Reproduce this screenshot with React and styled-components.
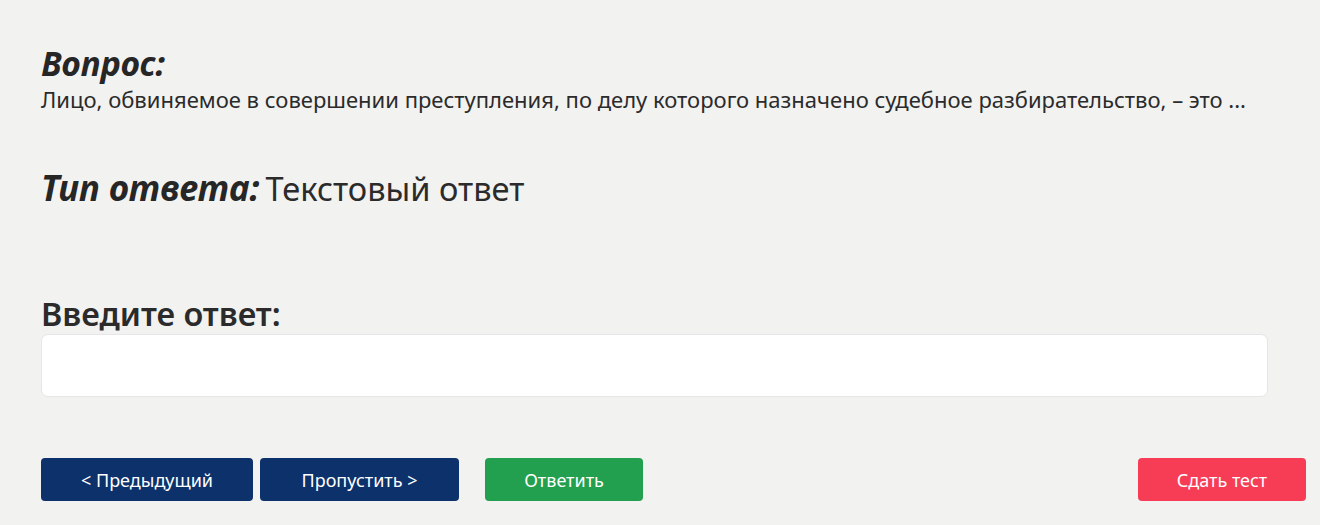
import React from 'react';
import styled, { createGlobalStyle } from 'styled-components';

const Global = createGlobalStyle`
  html, body {
    margin: 0;
    background: #f2f2f1;
    font-family: "Noto Sans", "Open Sans", sans-serif;
    color: #2b2b2b;
  }
`;

function App() {
  return (
    <Page>
      <Global />
      <Section>
        <Label>Вопрос:</Label>
        <Question>
          Лицо, обвиняемое в совершении преступления, по делу которого назначено судебное разбирательство, – это ...
        </Question>
      </Section>
      <TypeRow>
        <TypeLabel>Тип ответа:</TypeLabel>
        <TypeValue>Текстовый ответ</TypeValue>
      </TypeRow>
      <AnswerBlock>
        <AnswerTitle>Введите ответ:</AnswerTitle>
        <AnswerInput type="text" />
      </AnswerBlock>
      <Buttons>
        <Button $color="#0c316b">&lt; Предыдущий</Button>
        <Button $color="#0c316b" $w="199px">Пропустить &gt;</Button>
        <Button $color="#22a04f" $w="158px" $ml="19px">Ответить</Button>
        <Spacer />
        <Button $color="#f63d55" $w="168px">Сдать тест</Button>
      </Buttons>
    </Page>
  );
}

export default App;

const Page = styled.div`
  padding: 43px 14px 0 41px;
  display: flex;
  flex-direction: column;
`;
const Section = styled.div`
  display: flex;
  flex-direction: column;
`;
const Label = styled.h2`
  margin: 0;
  font-size: 33.5px;
  font-weight: 700;
  font-style: italic;
  line-height: 40px;
  color: #262626;
`;
const Question = styled.p`
  margin: 2px 0 0;
  font-size: 22px;
  line-height: 28px;
`;
const TypeRow = styled.div`
  margin-top: 53px;
  display: flex;
  align-items: baseline;
  gap: 6px;
  line-height: 44px;
`;
const TypeLabel = styled.span`
  font-size: 35px;
  font-weight: 700;
  font-style: italic;
  color: #262626;
`;
const TypeValue = styled.span`
  font-size: 32.6px;
  font-weight: 400;
`;
const AnswerBlock = styled.div`
  margin-top: 84px;
  display: flex;
  flex-direction: column;
`;
const AnswerTitle = styled.h3`
  margin: 0;
  font-size: 32.4px;
  font-weight: 600;
  line-height: 37px;
`;
const AnswerInput = styled.input`
  box-sizing: border-box;
  margin-top: 2px;
  width: calc(100% - 38px);
  height: 63px;
  background: #fff;
  border: 1px solid #e6e6e6;
  border-radius: 7px;
  outline: none;
`;
const Buttons = styled.div`
  margin-top: 61px;
  display: flex;
  gap: 7px;
`;
const Button = styled.button`
  width: ${p => p.$w || '212px'};
  margin-left: ${p => p.$ml || '0'};
  height: 43px;
  border: none;
  border-radius: 4px;
  background: ${p => p.$color};
  color: #fff;
  font-family: "Noto Sans", "Open Sans", sans-serif;
  font-size: 18px;
  cursor: pointer;
`;
const Spacer = styled.div`
  flex: 1;
`;
